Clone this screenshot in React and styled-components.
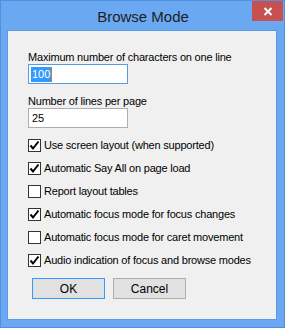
import styled, { createGlobalStyle } from "styled-components";

const GlobalStyle = createGlobalStyle`
  html, body {
    margin: 0;
    padding: 0;
    background: #6aa9f2;
  }
`;

/* ================= WINDOW FRAME ================= */

const Window = styled.div`
  width: 285px;
  height: 328px;
  box-sizing: border-box;
  background: #6aa9f2;
  border: 1px solid #4f90e0;
  display: flex;
  flex-direction: column;
  padding: 0 7px 7px 6px;
  font-family: "Liberation Sans", Arial, sans-serif;
`;

const TitleBar = styled.div`
  height: 29px;
  display: flex;
  align-items: center;
  justify-content: center;
  position: relative;
`;

const Title = styled.span`
  font-size: 15px;
  color: #1e1e1e;
  padding-left: 2px;
  margin-top: 2px;
`;

const CloseButton = styled.div`
  position: absolute;
  top: 0;
  right: -6px;
  width: 31px;
  height: 20px;
  background: #c75050;
  display: flex;
  align-items: center;
  justify-content: center;
`;

const Client = styled.div`
  flex: 1;
  background: #f0f0f0;
  border: 1px solid #5c9ae0;
  padding: 20px 0 0 20px;
  display: flex;
  flex-direction: column;
  font-size: 11px;
  letter-spacing: -0.2px;
`;

/* ================= FORM ================= */

const Label = styled.div`
  line-height: 13px;
  color: #000;
  white-space: nowrap;
`;

const Edit = styled.div`
  width: 100px;
  height: 20px;
  box-sizing: border-box;
  margin: 0 0 ${({ $mb }) => $mb}px 0;
  background: #fff;
  border: 1px solid ${({ $focused }) => ($focused ? "#569de5" : "#abadb3")};
  display: flex;
  align-items: center;
  padding-left: 2px;
  letter-spacing: 0;
`;

const Selected = styled.span`
  background: #3399ff;
  color: #fff;
  line-height: 15px;
  padding: 0 1px;
  border-right: 1px solid #c87a28;
`;

const Plain = styled.span`
  padding-left: 1px;
  color: #000;
`;

const Checks = styled.div`
  display: flex;
  flex-direction: column;
  gap: 10px;
`;

const CheckRow = styled.label`
  display: flex;
  align-items: center;
  gap: 3px;
  height: 13px;
  line-height: 13px;
  color: #000;
  white-space: nowrap;
`;

const Box = styled.span`
  width: 13px;
  height: 13px;
  box-sizing: border-box;
  border: 1px solid #333;
  background: #fff;
  display: flex;
  align-items: center;
  justify-content: center;
  flex-shrink: 0;
`;

const Buttons = styled.div`
  display: flex;
  gap: 8px;
  margin: 11px 0 0 4px;
`;

const Button = styled.div`
  width: 73px;
  height: 21px;
  box-sizing: border-box;
  border: 1px solid ${({ $default }) => ($default ? "#3399ff" : "#adadad")};
  background: #e1e1e1;
  font-size: 12px;
  letter-spacing: 0;
  color: #000;
  display: flex;
  align-items: center;
  justify-content: center;
`;

/* ================= COMPONENT ================= */

const options = [
  { text: "Use screen layout (when supported)", on: true },
  { text: "Automatic Say All on page load", on: true },
  { text: "Report layout tables", on: false },
  { text: "Automatic focus mode for focus changes", on: true },
  { text: "Automatic focus mode for caret movement", on: false },
  { text: "Audio indication of focus and browse modes", on: true },
];

function Check({ on }) {
  return (
    <Box>
      {on && (
        <svg width="11" height="11" viewBox="0 0 11 11">
          <path d="M1.5 5.5 L4 8.5 L9.5 1.5" fill="none" stroke="#000" strokeWidth="2" />
        </svg>
      )}
    </Box>
  );
}

export default function App() {
  return (
    <>
      <GlobalStyle />
      <Window>
        <TitleBar>
          <Title>Browse Mode</Title>
          <CloseButton>
            <svg width="10" height="9" viewBox="0 0 10 9">
              <path d="M1.5 1 L8.5 8 M8.5 1 L1.5 8" stroke="#fff" strokeWidth="2" />
            </svg>
          </CloseButton>
        </TitleBar>
        <Client>
          <Label>Maximum number of characters on one line</Label>
          <Edit $focused $mb={11}>
            <Selected>100</Selected>
          </Edit>
          <Label>Number of lines per page</Label>
          <Edit $mb={11}>
            <Plain>25</Plain>
          </Edit>
          <Checks>
            {options.map((o) => (
              <CheckRow key={o.text}>
                <Check on={o.on} />
                {o.text}
              </CheckRow>
            ))}
          </Checks>
          <Buttons>
            <Button $default>OK</Button>
            <Button>Cancel</Button>
          </Buttons>
        </Client>
      </Window>
    </>
  );
}
